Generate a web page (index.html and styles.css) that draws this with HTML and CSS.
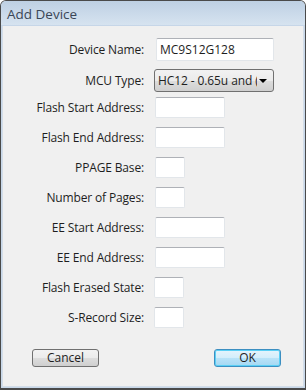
FILE: index.html
```html
<!DOCTYPE html>
<html>
<head>
<meta charset="utf-8">
<link rel="stylesheet" href="styles.css">
</head>
<body>
<div class="window">
  <div class="titlebar">Add Device</div>
  <div class="content">
    <div class="row row-first">
      <span class="label">Device Name:</span>
      <div class="input w-name"><span class="value">MC9S12G128</span></div>
    </div>
    <div class="row row-second">
      <span class="label">MCU Type:</span>
      <div class="select"><span class="select-text">HC12 - 0.65u and (</span><span class="arrow"></span></div>
    </div>
    <div class="row">
      <span class="label">Flash Start Address:</span>
      <div class="input w-addr"></div>
    </div>
    <div class="row">
      <span class="label">Flash End Address:</span>
      <div class="input w-addr"></div>
    </div>
    <div class="row">
      <span class="label">PPAGE Base:</span>
      <div class="input w-small"></div>
    </div>
    <div class="row">
      <span class="label">Number of Pages:</span>
      <div class="input w-small"></div>
    </div>
    <div class="row">
      <span class="label">EE Start Address:</span>
      <div class="input w-addr"></div>
    </div>
    <div class="row">
      <span class="label">EE End Address:</span>
      <div class="input w-addr"></div>
    </div>
    <div class="row">
      <span class="label">Flash Erased State:</span>
      <div class="input w-small shift"></div>
    </div>
    <div class="row">
      <span class="label">S-Record Size:</span>
      <div class="input w-small shift"></div>
    </div>
    <div class="buttons">
      <div class="btn btn-cancel">Cancel</div>
      <div class="btn btn-ok">OK</div>
    </div>
  </div>
</div>
</body>
</html>
```

FILE: styles.css
```css
html, body {
  margin: 0;
  padding: 0;
  background: #ffffff;
}
.window {
  width: 306px;
  height: 390px;
  box-sizing: border-box;
  border: 1px solid #4a4a4a;
  border-bottom-width: 2px;
  border-radius: 6px 6px 0 0;
  background: #f0f0f0;
  font-family: "Open Sans", "Noto Sans", sans-serif;
  font-size: 12px;
  color: #1e1e1e;
  display: flex;
  flex-direction: column;
  overflow: hidden;
  box-shadow: inset 0 0 0 1px #c8d8ea;
}
.titlebar {
  height: 24px;
  flex: none;
  background: linear-gradient(#bed0e3, #d6e3f0);
  color: #3a4656;
  font-size: 13.5px;
  line-height: 26px;
  padding-left: 6px;
  border-bottom: 1px solid #c6d6e8;
}
.content {
  flex: 1;
  padding: 12px 0 0 0;
  margin: 0 1px 1px 1px;
  border-left: 1px solid #d3dde8;
  border-right: 1px solid #d3dde8;
  border-bottom: 1px solid #d3dde8;
}
.row {
  display: flex;
  align-items: center;
  height: 21px;
  margin-bottom: 9px;
}
.row-first {
  height: 23px;
  margin-bottom: 8px;
}
.row-second {
  height: 23px;
  margin-bottom: 5px;
}
.label {
  width: 141px;
  text-align: right;
  margin-right: 11px;
  flex: none;
  white-space: nowrap;
  letter-spacing: -0.15px;
}
.input {
  box-sizing: border-box;
  height: 100%;
  background: #ffffff;
  border: 1px solid #e2e6ea;
  border-top-color: #aeb1b7;
  border-radius: 2px;
  display: flex;
  align-items: center;
}
.w-name { width: 118px; margin-left: 1px; }
.w-addr { width: 70px; }
.w-small { width: 30px; }
.shift { margin-left: -1px; }
.value {
  padding-left: 3px;
  color: #1e1e1e;
}
.select {
  box-sizing: border-box;
  height: 100%;
  width: 120px;
  margin-left: -1px;
  border: 1px solid #707070;
  border-radius: 3px;
  background: linear-gradient(#f2f2f2 0%, #ebebeb 50%, #dddddd 50%, #cfcfcf 100%);
  display: flex;
  align-items: center;
  overflow: hidden;
}
.select-text {
  flex: 1;
  overflow: hidden;
  white-space: nowrap;
  padding-left: 3px;
  color: #1e1e1e;
  letter-spacing: -0.1px;
}
.arrow {
  flex: none;
  width: 0;
  height: 0;
  border-left: 4px solid transparent;
  border-right: 4px solid transparent;
  border-top: 4px solid #000000;
  margin: 0 6px 0 2px;
}
.buttons {
  display: flex;
  justify-content: space-between;
  padding: 0 22px 0 29px;
  margin-top: 21px;
}
.btn {
  box-sizing: border-box;
  width: 67px;
  height: 18px;
  border-radius: 3px;
  text-align: center;
  line-height: 16px;
  font-size: 12px;
  color: #1e1e1e;
}
.btn-cancel {
  border: 1px solid #707070;
  background: linear-gradient(#f2f2f2 0%, #ebebeb 50%, #dddddd 50%, #cfcfcf 100%);
}
.btn-ok {
  border: 1px solid #3c8fc1;
  background: linear-gradient(#e5f4fc 0%, #d3eefb 50%, #b9e3f8 50%, #a4d8f3 100%);
  box-shadow: inset 0 0 0 1px #5ad0f5;
}
```
